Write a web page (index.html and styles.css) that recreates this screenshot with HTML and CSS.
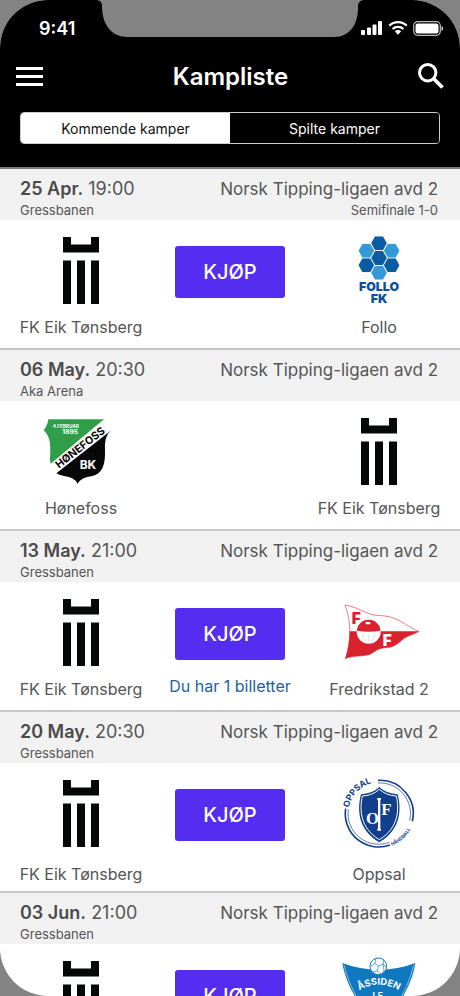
FILE: index.html
```html
<!DOCTYPE html>
<html lang="no">

<head>
    <meta charset="UTF-8">
    <meta name="viewport" content="width=device-width, initial-scale=1.0">
    <title>Kampliste</title>
    <link rel="stylesheet" href="styles.css">
</head>

<body>
    <!-- club crests used more than once -->
    <svg class="sprite" aria-hidden="true">
        <symbol id="eik" viewBox="0 0 36 67">
            <path d="M0 0h8v7.500h20V0h8v15.500H0z M0 23.500h8V67H0z M14 23.500h8V67h-8z M28 23.500h8V67h-8z" fill="#050807" />
        </symbol>
        <symbol id="hex" viewBox="0 0 48 43">
            <path d="M12 0h24l12 21.500L36 43H12L0 21.500z" />
        </symbol>
    </svg>

    <div class="phone">
        <header class="header">
            <svg class="notch" width="270" height="38" viewBox="0 0 270 38" aria-hidden="true">
                <path d="M0 0C5 0 7 2 7 6C7 24 16 37 33 37H239C255 37 263 24 263 8C263 2 265 0 270 0z" />
            </svg>

            <div class="status">
                <span class="time">9:41</span>
                <div class="status-icons">
                    <svg width="22" height="14" viewBox="0 0 22 14" fill="#fff" aria-hidden="true">
                        <rect x="0" y="9" width="4" height="5" rx="1" />
                        <rect x="6" y="6.500" width="4" height="7.500" rx="1" />
                        <rect x="11.500" y="3.500" width="4" height="10.500" rx="1" />
                        <rect x="17" y="0" width="4" height="14" rx="1" />
                    </svg>
                    <svg width="20" height="14" viewBox="0 0 20 14" aria-hidden="true">
                        <path d="M1.300 4.700a12.500 12.500 0 0 1 17.400 0M4.600 8a7.800 7.800 0 0 1 10.800 0" fill="none" stroke="#fff" stroke-width="2.300" />
                        <path d="M6.800 10.300a4.600 4.600 0 0 1 6.400 0L10 13.800z" fill="#fff" />
                    </svg>
                    <svg width="31" height="15" viewBox="0 0 31 15" aria-hidden="true">
                        <rect x="0.700" y="0.700" width="26.600" height="13.600" rx="4" fill="none" stroke="#bbb" stroke-width="1.200" />
                        <rect x="2.500" y="2.500" width="23" height="10" rx="2.300" fill="#fff" />
                        <path d="M28.500 5c2.200.7 2.200 4.300 0 5z" fill="#ccc" />
                    </svg>
                </div>
            </div>

            <div class="navbar">
                <button class="icon-btn" aria-label="Meny">
                    <svg width="27" height="19" viewBox="0 0 27 19" aria-hidden="true">
                        <path d="M0 0h27v3H0z M0 8h27v3H0z M0 16h27v3H0z" fill="#fff" />
                    </svg>
                </button>
                <h1>Kampliste</h1>
                <button class="icon-btn" aria-label="Søk">
                    <svg width="26" height="26" viewBox="0 0 26 26" fill="none" stroke="#fff" aria-hidden="true">
                        <circle cx="9.700" cy="9.700" r="8.200" stroke-width="3" />
                        <path d="M15.500 15.500l9 9" stroke-width="3.800" />
                    </svg>
                </button>
            </div>

            <div class="tabs">
                <button class="tab active">Kommende kamper</button>
                <button class="tab">Spilte kamper</button>
            </div>
        </header>

        <main class="matches">
            <section class="match">
                <div class="match-info">
                    <div>
                        <p class="main-line"><b>25 Apr.</b> 19:00</p>
                        <p class="sub-line">Gressbanen</p>
                    </div>
                    <div class="league">
                        <p class="main-line">Norsk Tipping-ligaen avd 2</p>
                        <p class="sub-line">Semifinale 1-0</p>
                    </div>
                </div>
                <div class="match-body">
                    <div class="team">
                        <div class="logo"><svg width="36" height="67"><use href="#eik" /></svg></div>
                        <p>FK Eik Tønsberg</p>
                    </div>
                    <div class="buy">
                        <button class="buy-btn">KJØP</button>
                    </div>
                    <div class="team">
                        <div class="logo">
                            <svg width="42" height="68" viewBox="378 214 126 204" aria-hidden="true">
                                <g fill="#0b5ba3">
                                    <use href="#hex" x="417" y="215" width="48" height="42" />
                                    <use href="#hex" x="417" y="259" width="48" height="42" />
                                    <use href="#hex" x="379" y="281" width="48" height="42" />
                                    <use href="#hex" x="455" y="281" width="48" height="42" />
                                </g>
                                <g fill="#3399d8">
                                    <use href="#hex" x="379" y="237" width="48" height="42" />
                                    <use href="#hex" x="455" y="237" width="48" height="42" />
                                    <use href="#hex" x="417" y="303" width="48" height="42" />
                                </g>
                                <g class="crest-text heavy" fill="#0b5199" text-anchor="middle">
                                    <text x="441" y="380" font-size="37">FOLLO</text>
                                    <text x="441" y="416" font-size="37">FK</text>
                                </g>
                            </svg>
                        </div>
                        <p>Follo</p>
                    </div>
                </div>
            </section>

            <section class="match">
                <div class="match-info">
                    <div>
                        <p class="main-line"><b>06 May.</b> 20:30</p>
                        <p class="sub-line">Aka Arena</p>
                    </div>
                    <div class="league">
                        <p class="main-line">Norsk Tipping-ligaen avd 2</p>
                    </div>
                </div>
                <div class="match-body">
                    <div class="team">
                        <div class="logo">
                            <svg width="76" height="66" viewBox="39 47 228 198" aria-hidden="true">
                                <path d="M55 51H222L62 184Q58 170 61 151C61 120 61 105 41 83Q52 72 55 51z" fill="#2f9e48" />
                                <path d="M246 81C227 98 224 116 225 143C227 193 213 215 187 221Q153 225 143 244Q134 225 102 221Q87 218 79 213L238 88z" fill="#080808" />
                                <g class="crest-text" fill="#fff">
                                    <text x="68" y="77" font-size="14">4.FEBRUAR</text>
                                    <text x="97" y="96" font-size="20">1895</text>
                                    <text x="149" y="201" font-size="36">BK</text>
                                </g>
                                <text class="crest-text" x="87" y="199" font-size="32" fill="#080808" transform="rotate(-38 87 199)">HØNEFOSS</text>
                            </svg>
                        </div>
                        <p>Hønefoss</p>
                    </div>
                    <div class="buy"></div>
                    <div class="team">
                        <div class="logo"><svg width="36" height="67"><use href="#eik" /></svg></div>
                        <p>FK Eik Tønsberg</p>
                    </div>
                </div>
            </section>

            <section class="match">
                <div class="match-info">
                    <div>
                        <p class="main-line"><b>13 May.</b> 21:00</p>
                        <p class="sub-line">Gressbanen</p>
                    </div>
                    <div class="league">
                        <p class="main-line">Norsk Tipping-ligaen avd 2</p>
                    </div>
                </div>
                <div class="match-body">
                    <div class="team">
                        <div class="logo"><svg width="36" height="67"><use href="#eik" /></svg></div>
                        <p>FK Eik Tønsberg</p>
                    </div>
                    <div class="buy">
                        <button class="buy-btn">KJØP</button>
                        <a class="tickets" href="#">Du har 1 billetter</a>
                    </div>
                    <div class="team">
                        <div class="logo">
                            <svg width="76" height="56" viewBox="46 39 228 168" aria-hidden="true">
                                <path d="M58 42C82 45 105 58 130 68C150 76 170 72 190 77C225 86 240 103 280 122C262 132 245 133 228 148C205 168 195 170 178 170C150 172 145 188 125 192C100 197 82 193 59 203C76 150 78 95 58 42z" fill="#fff" stroke="#d4444c" stroke-width="2" />
                                <path d="M72 121H280C262 132 245 133 228 148C205 168 195 170 178 170C150 172 145 188 125 192C100 197 82 193 59 203Q72 162 72 121z" fill="#d9222e" />
                                <circle cx="129" cy="122" r="36" fill="#fff" />
                                <path d="M94 119a35 33 0 0 1 70 0q-35 6-70 0z" fill="#d9222e" />
                                <path d="M119 95q8-5 16 0l-2 5h-12z" fill="#fff" />
                                <path d="M111 127q2 15 7 25M129 128v27M147 127q-2 15-7 25" fill="none" stroke="#e5d5d5" stroke-width="2" />
                                <g class="crest-text heavy" font-size="46">
                                    <text x="78" y="98" fill="#d9222e">F</text>
                                    <text x="171" y="165" fill="#fff">F</text>
                                </g>
                            </svg>
                        </div>
                        <p>Fredrikstad 2</p>
                    </div>
                </div>
            </section>

            <section class="match tall">
                <div class="match-info">
                    <div>
                        <p class="main-line"><b>20 May.</b> 20:30</p>
                        <p class="sub-line">Gressbanen</p>
                    </div>
                    <div class="league">
                        <p class="main-line">Norsk Tipping-ligaen avd 2</p>
                    </div>
                </div>
                <div class="match-body">
                    <div class="team">
                        <div class="logo"><svg width="36" height="67"><use href="#eik" /></svg></div>
                        <p>FK Eik Tønsberg</p>
                    </div>
                    <div class="buy">
                        <button class="buy-btn">KJØP</button>
                    </div>
                    <div class="team">
                        <div class="logo">
                            <svg width="72" height="72" viewBox="34 34 216 216" aria-hidden="true">
                                <defs>
                                    <path id="oppsalArc" d="M52 126A96 96 0 0 1 152 49" />
                                    <path id="handballArc" d="M180 240A106 106 0 0 0 247 160" />
                                </defs>
                                <g fill="none" stroke="#123f8c">
                                    <path d="M139 44A100 100 0 0 1 242 167M42 129A100 100 0 0 0 175 238" stroke-width="5" />
                                    <path d="M139 52A92 92 0 0 1 234 165M50 131A92 92 0 0 0 173 230" stroke-width="2" />
                                </g>
                                <path d="M143 64Q164 84 198 86C208 125 212 190 143 230C74 190 78 125 88 86Q122 84 143 64z" fill="#123f8c" />
                                <path d="M143 71Q165 90 194 91C202 128 203 186 143 222C83 186 84 128 92 91Q121 90 143 71z" fill="none" stroke="#fff" stroke-width="3" />
                                <path d="M137 97h11v6h-2v86h2v6h-11v-6h2v-86h-2z" fill="#fff" />
                                <g class="crest-serif" fill="#fff" font-size="50">
                                    <text x="103" y="175">O</text>
                                    <text x="149" y="148">F</text>
                                </g>
                                <g class="crest-text" fill="#123f8c">
                                    <text font-size="26"><textPath href="#oppsalArc">OPPSAL</textPath></text>
                                    <text font-size="14"><textPath href="#handballArc">HÅNDBALL</textPath></text>
                                </g>
                            </svg>
                        </div>
                        <p>Oppsal</p>
                    </div>
                </div>
            </section>

            <section class="match">
                <div class="match-info">
                    <div>
                        <p class="main-line"><b>03 Jun.</b> 21:00</p>
                        <p class="sub-line">Gressbanen</p>
                    </div>
                    <div class="league">
                        <p class="main-line">Norsk Tipping-ligaen avd 2</p>
                    </div>
                </div>
                <div class="match-body">
                    <div class="team">
                        <div class="logo"><svg width="36" height="67"><use href="#eik" /></svg></div>
                        <p>FK Eik Tønsberg</p>
                    </div>
                    <div class="buy">
                        <button class="buy-btn">KJØP</button>
                    </div>
                    <div class="team">
                        <div class="logo">
                            <svg width="74" height="74" viewBox="332 228 222 222" aria-hidden="true">
                                <path d="M333 246Q385 266 443 266T552 246C546 290 524 335 497 375Q475 415 443 446Q411 415 389 375C362 335 340 290 333 246z" fill="#0f78bf" />
                                <path d="M338 252C348 295 368 338 394 378M547 252C537 295 518 338 492 378" fill="none" stroke="#fff" stroke-width="1.500" />
                                <circle cx="441" cy="256" r="25" fill="#fff" stroke="#0f78bf" stroke-width="3" />
                                <path d="M433 233l-2 14 10 8 14-6 2-13M431 247l-12 9M441 255l-3 15 12 10M438 270l-15 3M455 249l9 9M450 280l8-11-3-20" fill="none" stroke="#0f78bf" stroke-width="2" />
                                <defs>
                                    <path id="assidenArc" d="M374 334Q443 288 512 334" />
                                </defs>
                                <g class="crest-text" fill="#fff" text-anchor="middle">
                                    <text font-size="28"><textPath href="#assidenArc" startOffset="50%">ÅSSIDEN</textPath></text>
                                    <text x="443" y="353" font-size="26">I.F.</text>
                                </g>
                            </svg>
                        </div>
                        <p>Åssiden</p>
                    </div>
                </div>
            </section>
        </main>
    </div>
</body>

</html>
```

FILE: styles.css
```css
* {
    box-sizing: border-box;
}

body {
    margin: 0;
    background-color: #838383;
    color: #555;
    font-family: Inter, "Liberation Sans", sans-serif;
}

p, h1 {
    margin: 0;
}

button {
    font-family: inherit;
    cursor: pointer;
}

svg {
    display: block;
    flex-shrink: 0;
    overflow: visible;
}

.sprite {
    position: absolute;
    width: 0;
    height: 0;
}

.phone {
    height: 100vh;
    display: flex;
    flex-direction: column;
    background-color: #fff;
    border-radius: 48px;
    overflow: hidden;
}

/* top bar */
.header {
    position: relative;
    flex-shrink: 0;
    padding: 16px 16px 23px;
    background-color: #000;
    color: #fff;
}

.notch {
    position: absolute;
    top: 0;
    left: 50%;
    margin-left: -135px;
    fill: #838383;
}

.status {
    display: flex;
    justify-content: space-between;
    align-items: center;
    height: 24px;
    padding-left: 23px;
}

.time {
    font-size: 18px;
    font-weight: 600;
}

.status-icons {
    display: flex;
    align-items: center;
    gap: 5px;
}

.navbar {
    display: flex;
    justify-content: space-between;
    align-items: center;
    height: 72px;
}

.navbar h1 {
    font-size: 24px;
    font-weight: 600;
}

.icon-btn {
    padding: 0;
    border: none;
    background: none;
}

.tabs {
    display: flex;
    height: 32px;
    margin: 0 4px;
    border: 1px solid #ccc;
    border-radius: 4px;
    overflow: hidden;
}

.tab {
    flex: 1;
    padding: 0;
    border: none;
    background-color: #000;
    color: #fff;
    font-size: 14px;
}

.tab.active {
    background-color: #fff;
    color: #111;
}

/* match list */
.matches {
    flex: 1;
    overflow: hidden;
}

.match {
    border-top: 2px solid #c8c8c8;
}

.match:first-child {
    border-top-color: #777;
}

.match-info {
    display: flex;
    justify-content: space-between;
    height: 51px;
    padding: 8px 22px 0 20px;
    background-color: #f1f1f1;
    white-space: nowrap;
}

.main-line {
    font-size: 18px;
    line-height: 24px;
}

.main-line b {
    font-weight: 600;
    color: #4a4a4a;
}

.sub-line {
    font-size: 13px;
    line-height: 18px;
}

.league {
    text-align: right;
}

.league .main-line {
    font-size: 17px;
}

.match-body {
    display: grid;
    grid-template-columns: 130px 1fr 130px;
    min-height: 128px;
    padding: 14px 16px 5px;
}

.team {
    text-align: center;
    font-size: 16px;
    line-height: 24px;
    white-space: nowrap;
}

.logo {
    display: flex;
    justify-content: center;
    align-items: center;
    height: 72px;
    margin-bottom: 9px;
}

.tall .logo {
    margin-bottom: 13px;
}

.buy {
    display: flex;
    flex-direction: column;
    align-items: center;
    padding-top: 12px;
}

.buy-btn {
    width: 110px;
    height: 52px;
    padding: 0;
    border: none;
    border-radius: 3px;
    background-color: #552df0;
    color: #fff;
    font-size: 20px;
    font-weight: 500;
}

.tickets {
    margin-top: 16px;
    color: #1b62a5;
    font-size: 16px;
    line-height: 20px;
    text-decoration: none;
    white-space: nowrap;
}

/* lettering inside the crests */
.crest-text {
    font-family: Inter, "Liberation Sans", sans-serif;
    font-weight: 700;
}

.crest-text.heavy {
    font-weight: 900;
}

.crest-serif {
    font-family: "Liberation Serif", serif;
    font-weight: 700;
}
```
